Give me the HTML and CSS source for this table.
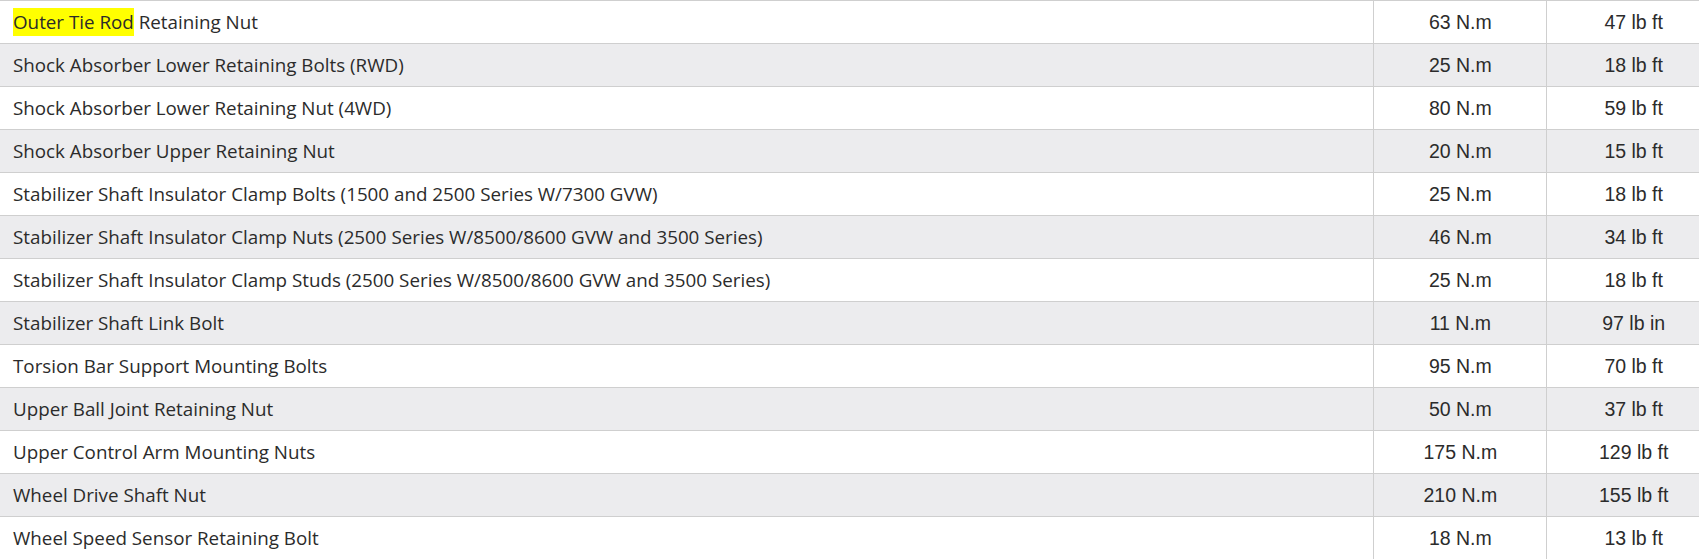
FILE: index.html
```html
<!DOCTYPE html>
<html>
<head>
<meta charset="utf-8">
<link rel="stylesheet" href="styles.css">
</head>
<body>
<table class="spec">
  <colgroup><col class="c-name"><col class="c-val"><col class="c-val"></colgroup>
  <tbody>
    <tr><td class="name"><span class="hl">Outer Tie Rod</span> Retaining Nut</td><td class="val">63 N.m</td><td class="val">47 lb ft</td></tr>
    <tr><td class="name">Shock Absorber Lower Retaining Bolts (RWD)</td><td class="val">25 N.m</td><td class="val">18 lb ft</td></tr>
    <tr><td class="name">Shock Absorber Lower Retaining Nut (4WD)</td><td class="val">80 N.m</td><td class="val">59 lb ft</td></tr>
    <tr><td class="name">Shock Absorber Upper Retaining Nut</td><td class="val">20 N.m</td><td class="val">15 lb ft</td></tr>
    <tr><td class="name">Stabilizer Shaft Insulator Clamp Bolts (1500 and 2500 Series W/7300 GVW)</td><td class="val">25 N.m</td><td class="val">18 lb ft</td></tr>
    <tr><td class="name">Stabilizer Shaft Insulator Clamp Nuts (2500 Series W/8500/8600 GVW and 3500 Series)</td><td class="val">46 N.m</td><td class="val">34 lb ft</td></tr>
    <tr><td class="name">Stabilizer Shaft Insulator Clamp Studs (2500 Series W/8500/8600 GVW and 3500 Series)</td><td class="val">25 N.m</td><td class="val">18 lb ft</td></tr>
    <tr><td class="name">Stabilizer Shaft Link Bolt</td><td class="val">11 N.m</td><td class="val">97 lb in</td></tr>
    <tr><td class="name">Torsion Bar Support Mounting Bolts</td><td class="val">95 N.m</td><td class="val">70 lb ft</td></tr>
    <tr><td class="name">Upper Ball Joint Retaining Nut</td><td class="val">50 N.m</td><td class="val">37 lb ft</td></tr>
    <tr><td class="name">Upper Control Arm Mounting Nuts</td><td class="val">175 N.m</td><td class="val">129 lb ft</td></tr>
    <tr><td class="name">Wheel Drive Shaft Nut</td><td class="val">210 N.m</td><td class="val">155 lb ft</td></tr>
    <tr><td class="name">Wheel Speed Sensor Retaining Bolt</td><td class="val">18 N.m</td><td class="val">13 lb ft</td></tr>
  </tbody>
</table>
</body>
</html>
```
FILE: styles.css
```css
html, body {
  margin: 0;
  padding: 0;
  overflow: hidden;
  background: #ffffff;
}
.spec {
  width: 1720px;
  border-collapse: collapse;
  table-layout: fixed;
  color: #2b2b2b;
}
.c-name { width: 1373px; }
.c-val { width: 173px; }
.spec tr {
  height: 43px;
}
.spec tr:nth-child(even) td {
  background: #ececee;
}
.spec td {
  border-top: 1px solid #cfcfcf;
  border-bottom: 1px solid #cfcfcf;
  padding: 0;
  vertical-align: middle;
  white-space: nowrap;
}
.spec td.name {
  padding-left: 13px;
  font-family: "Open Sans", sans-serif;
  font-size: 18.8px;
}
.spec td.val {
  border-left: 1px solid #cfcfcf;
  text-align: center;
  font-family: "Liberation Sans", Arial, sans-serif;
  font-size: 19.5px;
}
.hl {
  background: #ffff00;
  padding: 1px 0;
}
```
